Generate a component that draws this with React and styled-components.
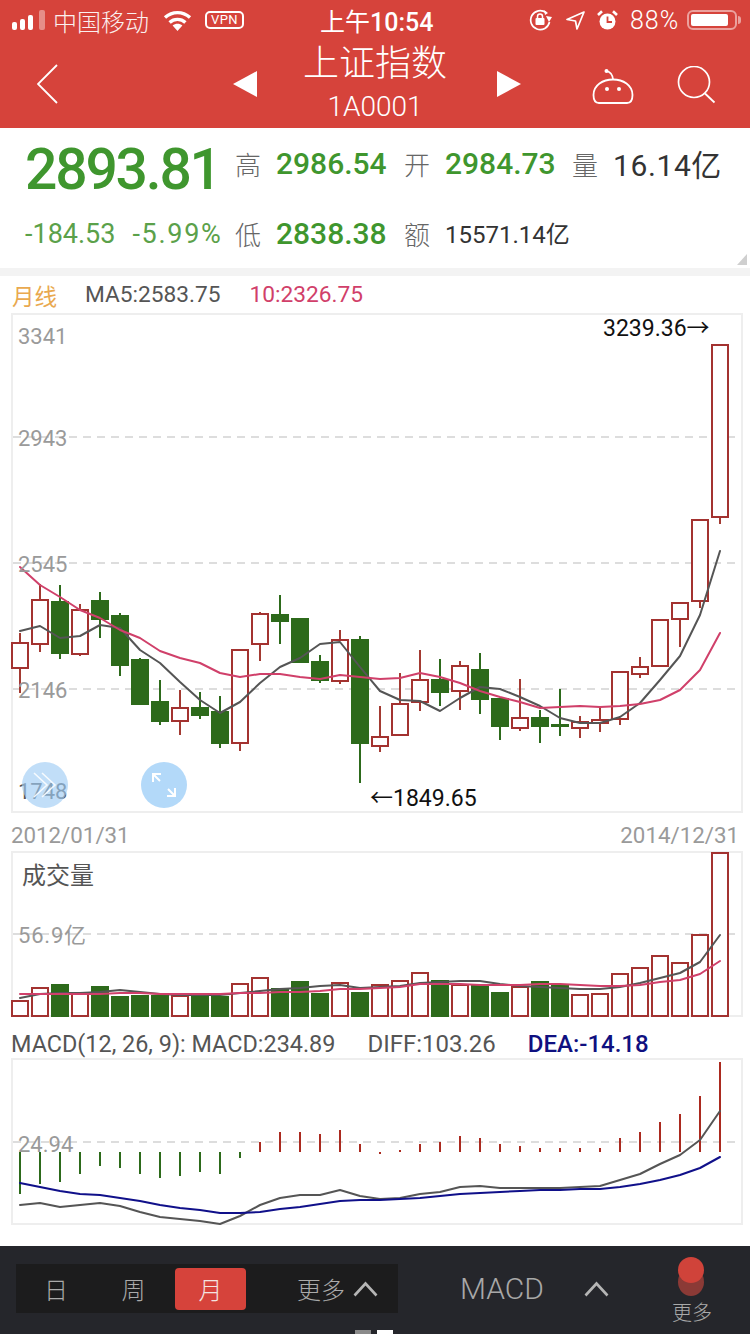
import React from "react";
import styled, { createGlobalStyle } from "styled-components";

const Global = createGlobalStyle`
  html, body { margin: 0; padding: 0; background: #fff; }
  body { font-family: Roboto, "Noto Sans CJK SC", sans-serif; }
`;

const RED = "#d6433b";

const Page = styled.div`
  position: relative;
  width: 750px;
  height: 1334px;
  overflow: hidden;
  display: flex;
  flex-direction: column;
  background: #fff;
`;

/* ---------- header ---------- */
const Header = styled.header`
  height: 128px;
  background: ${RED};
  color: #fff;
  display: flex;
  flex-direction: column;
`;
const StatusBar = styled.div`
  height: 40px;
  display: flex;
  align-items: center;
  font-size: 24px;
  color: #fff;
  padding-left: 12px;
`;
const Carrier = styled.span`
  margin-left: 7px;
  width: 96px;
  opacity: 0.92;
  font-weight: 300;
`;
const Vpn = styled.span`
  margin-left: 13px;
  width: 39px;
  height: 18px;
  box-sizing: border-box;
  border: 2px solid #fff;
  border-radius: 5px;
  font-size: 13px;
  line-height: 14px;
  text-align: center;
  letter-spacing: 0.4px;
`;
const Clock = styled.span`
  margin-left: 76px;
  width: 116px;
  white-space: nowrap;
  font-size: 25px;
  font-weight: 500;
`;
const ClockCjk = styled.span`
  font-weight: 400;
`;
const StatusGap = styled.span`
  width: 76px;
`;
const Percent = styled.span`
  margin-left: 12px;
  width: 52px;
  font-size: 25px;
  font-weight: 300;
  letter-spacing: 1px;
`;
const Battery = styled.span`
  position: relative;
  margin-left: 5px;
  width: 50px;
  height: 20px;
  box-sizing: border-box;
  border: 2px solid rgba(255, 255, 255, 0.5);
  border-radius: 6px;
  padding: 2px;
  display: flex;
  &::before {
    content: "";
    width: 88%;
    background: #fff;
    border-radius: 2px;
  }
  &::after {
    content: "";
    position: absolute;
    right: -6px;
    top: 4px;
    width: 3px;
    height: 8px;
    border-radius: 0 3px 3px 0;
    background: rgba(255, 255, 255, 0.5);
  }
`;
const Nav = styled.nav`
  flex: 1;
  display: flex;
  align-items: center;
  padding-left: 37px;
`;
const TitleBlock = styled.div`
  width: 236px;
  margin-right: 4px;
  display: flex;
  flex-direction: column;
  align-items: center;
  margin-top: -3px;
`;
const Title = styled.div`
  font-size: 36px;
  line-height: 46px;
  font-weight: 300;
  white-space: nowrap;
`;
const Code = styled.div`
  font-size: 28px;
  line-height: 36px;
  font-weight: 300;
  margin-top: 2px;
`;
const Glyph = styled.svg`
  display: block;
  flex: none;
  margin-left: ${(p) => p.$ml || 0}px;
  margin-top: ${(p) => p.$mt || 0}px;
`;

/* ---------- quote ---------- */
const Quote = styled.section`
  position: relative;
  height: 140px;
  box-sizing: border-box;
  padding-left: 25px;
  display: grid;
  grid-template-columns: 210px 41px 128px 41px 127px 41px 1fr;
  grid-template-rows: 70px 70px;
  align-items: center;
  &::after {
    content: "";
    position: absolute;
    right: 3px;
    bottom: 3px;
    width: 10px;
    height: 11px;
    background: #cfcfcf;
    clip-path: polygon(100% 0, 100% 100%, 0 100%);
  }
`;
const Price = styled.div`
  font-size: 57px;
  font-weight: 500;
  line-height: 60px;
  letter-spacing: -2.2px;
  color: #3f962e;
  margin-top: 14px;
  white-space: nowrap;
`;
const Changes = styled.div`
  display: flex;
  gap: 17px;
  font-size: 27px;
  color: #5ba14a;
  white-space: nowrap;
  margin-top: 2px;
`;
const Pct = styled.span`
  letter-spacing: 1.7px;
`;
const QLabel = styled.span`
  font-size: 26px;
  color: #666;
  font-weight: 300;
`;
const QValue = styled.span`
  font-size: ${(p) => p.$size || 30}px;
  font-weight: ${(p) => p.$weight || 500};
  letter-spacing: ${(p) => p.$ls || 0}px;
  color: ${(p) => p.$color || "#3f962e"};
  white-space: nowrap;
  margin-top: ${(p) => p.$mt || 0}px;
  grid-column: ${(p) => (p.$span ? `span ${p.$span}` : "auto")};
`;

const Strip = styled.div`
  height: 8px;
  background: #f3f3f3;
`;

/* ---------- chart legends ---------- */
const Legend = styled.div`
  height: 37px;
  flex: none;
  display: flex;
  align-items: center;
  font-size: 22.7px;
  padding-left: 12px;
  color: #555;
  white-space: nowrap;
`;
const Period = styled.span`
  color: #e9a94f;
  font-size: 22.5px;
  width: 73px;
`;
const Pink = styled.span`
  color: #d13f6a;
  margin-left: 29px;
`;
const MacdRow = styled.div`
  height: 41px;
  box-sizing: border-box;
  padding: 12px 0 0 11px;
  flex: none;
  display: flex;
  align-items: center;
  font-size: 23.4px;
  color: #555;
  white-space: nowrap;
`;
const MacdItem = styled.span`
  margin-left: ${(p) => p.$ml || 0}px;
  font-size: 24px;
  color: ${(p) => p.$color || "#555"};
  font-weight: ${(p) => p.$weight || 400};
`;

/* ---------- chart panels ---------- */
const Panel = styled.div`
  position: relative;
  flex: none;
  width: 732px;
  height: ${(p) => p.$h}px;
  margin-left: 11px;
  box-sizing: border-box;
  border: 2px solid #eee;
  background: #fff;
`;
const Plot = styled.svg`
  display: block;
  overflow: visible;
`;
const Axis = styled.span`
  position: absolute;
  left: 5px;
  top: ${(p) => p.$top}px;
  font-size: 22px;
  line-height: 26px;
  letter-spacing: ${(p) => p.$ls || 0}px;
  color: ${(p) => p.$color || "#9a9a9a"};
  white-space: nowrap;
`;
const VolTitle = styled.span`
  position: absolute;
  left: 9px;
  top: 8px;
  font-size: 24px;
  line-height: 30px;
  color: #555;
`;
const Extreme = styled.span`
  position: absolute;
  left: ${(p) => p.$left}px;
  top: ${(p) => p.$top}px;
  font-size: 23px;
  line-height: 26px;
  color: #111;
  white-space: nowrap;
`;
const Round = styled.span`
  position: absolute;
  left: ${(p) => p.$left}px;
  top: 447px;
  width: 46px;
  height: 46px;
  border-radius: 50%;
  background: ${(p) => (p.$soft ? "rgba(159,205,245,0.65)" : "#b3d9f9")};
  display: flex;
  align-items: center;
  justify-content: center;
`;
const Dates = styled.div`
  height: 38px;
  box-sizing: border-box;
  padding-top: 6px;
  flex: none;
  display: flex;
  align-items: center;
  justify-content: space-between;
  width: 728px;
  margin-left: 11px;
  font-size: 22.3px;
  color: #9a9a9a;
`;

const Grid = styled.line`
  stroke: #d2d2d2;
  stroke-width: 1.5;
  stroke-dasharray: 8 6;
`;
const Wick = styled.line`
  stroke: ${(p) => (p.$up ? "#a33a32" : "#2d6a1b")};
  stroke-width: 2;
`;
const Body = styled.rect`
  fill: ${(p) => (p.$up ? "#fff" : "#2d6a1b")};
  stroke: ${(p) => (p.$up ? "#a33230" : "#2d6a1b")};
  stroke-width: 2;
`;
const Trend = styled.polyline`
  fill: none;
  stroke: ${(p) => p.$color};
  stroke-width: 2;
  stroke-linejoin: round;
  stroke-linecap: round;
`;
const Stem = styled.rect`
  fill: ${(p) => (p.$up ? "#ab2a1f" : "#2d6a1b")};
`;

/* ---------- tool bar ---------- */
const Spacer = styled.div`
  flex: 1;
`;
const Bar = styled.footer`
  height: 88px;
  flex: none;
  background: #25262b;
  display: flex;
  align-items: flex-start;
  padding: 18px 0 0 16px;
  box-sizing: border-box;
  color: #aaa;
`;
const TabGroup = styled.div`
  width: 382px;
  height: 49px;
  background: #1c1c1d;
  display: flex;
  align-items: center;
`;
const Tab = styled.span`
  width: ${(p) => p.$w}px;
  height: 42px;
  margin-left: ${(p) => p.$ml || 0}px;
  display: flex;
  align-items: center;
  justify-content: center;
  font-size: 24px;
  font-weight: 300;
  border-radius: 4px;
  color: ${(p) => (p.$active ? "#f3e3e0" : "#aaa")};
  background: ${(p) => (p.$active ? RED : "transparent")};
`;
const More = styled.span`
  margin-left: 51px;
  font-size: 24px;
  font-weight: 300;
  white-space: nowrap;
`;
const MacdBtn = styled.span`
  margin-left: 62px;
  font-size: 30px;
  line-height: 49px;
  color: #a8a8a8;
  font-weight: 300;
`;
const Menu = styled.div`
  margin-left: 60px;
  width: 44px;
  margin-top: -7px;
  display: flex;
  flex-direction: column;
  align-items: center;
`;
const MenuText = styled.span`
  font-size: 20px;
  line-height: 26px;
  margin-top: 4px;
  margin-left: 2px;
  font-weight: 300;
  white-space: nowrap;
`;
const Dot = styled.span`
  position: absolute;
  bottom: 0;
  left: ${(p) => p.$left}px;
  width: 16px;
  height: 4px;
  background: ${(p) => p.$color};
`;

/* ---------- data ---------- */
// [body-top, body-bottom, wick-top, wick-bottom, up]
const candles = [
  [643,668,633,693,1],[600,644,584,652,1],[602,653,585,659,0],[610,654,604,656,1],
  [601,619,592,638,0],[616,665,613,676,0],[660,704,658,704,0],[702,721,680,725,0],
  [708,721,690,735,1],[708,715,692,719,0],[712,743,696,748,0],[650,743,650,751,1],
  [614,644,612,661,1],[615,621,595,644,0],[619,662,619,663,0],[662,680,655,683,0],
  [640,681,630,684,1],[640,743,636,783,0],[737,746,706,752,1],[704,735,673,735,1],
  [680,702,650,711,1],[680,692,659,706,0],[666,691,661,710,1],[670,699,653,714,0],
  [699,726,699,740,0],[718,728,679,731,1],[718,726,710,743,0],[725,726,689,736,0],
  [722,728,716,738,1],[720,723,707,732,1],[672,719,672,725,1],[667,674,657,678,1],
  [620,666,620,666,1],[603,619,603,647,1],[520,601,520,608,1],[345,517,345,524,1],
];
const ma5 = [631,626,638,636,625,628,650,663,682,700,713,702,683,667,658,644,642,667,691,700,701,711,698,687,689,697,706,718,723,723,717,703,680,656,615,551];
const ma10 = [567,585,597,610,618,630,638,651,658,663,673,677,674,674,677,679,675,677,679,678,673,677,683,691,697,702,708,707,706,707,706,704,700,690,670,633];
const volTops = [1001,988,985,993,987,997,996,996,996,997,997,984,978,989,982,994,983,993,985,981,973,981,985,985,993,987,982,986,995,994,974,968,956,963,935,853];
const volUp = candles.map((c) => c[4]);
const volA = [998,994,993,993,992,990,992,994,995,995,995,993,991,989,988,986,985,988,987,986,983,982,981,981,984,986,987,988,989,989,987,983,978,973,962,935];
const volB = [994,994,994,994,994,993,993,994,994,994,994,993,993,992,992,991,989,989,988,987,984,984,984,985,985,985,984,984,985,986,986,985,982,980,974,961];
const stems = [1194,1184,1182,1174,1166,1168,1174,1178,1176,1172,1174,1158,1142,1132,1132,1134,1130,1144,1154,1150,1144,1142,1136,1138,1144,1146,1148,1148,1148,1148,1138,1132,1122,1114,1096,1062];
const diff = [1205,1203,1207,1205,1203,1206,1212,1217,1219,1221,1224,1216,1205,1198,1195,1195,1190,1196,1199,1198,1194,1192,1187,1186,1188,1188,1188,1188,1187,1186,1180,1174,1164,1155,1140,1111];
const dea = [1183,1187,1191,1194,1195,1198,1201,1205,1208,1210,1213,1213,1212,1209,1207,1204,1201,1200,1200,1199,1198,1196,1194,1193,1192,1191,1190,1190,1189,1189,1187,1184,1180,1175,1168,1157];

const xAt = (i) => 20 + i * 20;
const pts = (a) => a.map((y, i) => `${xAt(i)},${y}`).join(" ");

/* ---------- icons ---------- */
const Signal = () => (
  <Glyph width="34" height="20" viewBox="0 0 34 20">
    <rect x="0" y="12" width="5" height="8" rx="2" fill="#fff" />
    <rect x="8" y="9" width="5" height="11" rx="2" fill="#fff" />
    <rect x="16" y="5" width="5" height="15" rx="2" fill="#fff" />
    <rect x="27" y="0" width="6" height="20" rx="2" fill="#fff" opacity=".4" />
  </Glyph>
);
const Wifi = () => (
  <Glyph $ml={14} width="29" height="21" viewBox="0 0 29 21">
    <path d="M14.5 21 L9.6 15.6 C12.4 13.2 16.6 13.2 19.4 15.6Z" fill="#fff" />
    <path d="M6.6 12.4 C11 8.4 18 8.4 22.4 12.4 M2 7.6 C9.4 1 19.6 1 27 7.6" stroke="#fff" strokeWidth="3.4" fill="none" />
  </Glyph>
);
const RotLock = () => (
  <Glyph $ml={17} width="24" height="22" viewBox="0 0 24 22">
    <path d="M20.5 13 A9.5 9.5 0 1 1 17 3.6" fill="none" stroke="#fff" strokeWidth="1.7" />
    <path d="M17 7 L23 8 L20 13Z M15 1 L19 4 L16 6Z" fill="#fff" />
    <rect x="6.5" y="9" width="9" height="7" rx="1" fill="#fff" />
    <path d="M8.5 9 V7.5 A2.5 2.5 0 0 1 13.5 7.5 V9" fill="none" stroke="#fff" strokeWidth="1.5" />
  </Glyph>
);
const Locate = () => (
  <Glyph $ml={13} width="19" height="19" viewBox="0 0 19 19">
    <path d="M18 1 L1 8.5 L9.5 10 L11 18Z" fill="none" stroke="#fff" strokeWidth="1.7" strokeLinejoin="round" />
  </Glyph>
);
const Alarm = () => (
  <Glyph $ml={12} width="21" height="20" viewBox="0 0 21 20">
    <circle cx="10.5" cy="11.5" r="8" fill="#fff" />
    <path d="M10.5 6.5 V12 H15" fill="none" stroke={RED} strokeWidth="1.8" />
    <path d="M1 5 L5 1.2 M20 5 L16 1.2" stroke="#fff" strokeWidth="2.6" />
  </Glyph>
);
const Back = () => (
  <Glyph width="21" height="40" viewBox="0 0 21 40">
    <path d="M20 1 L1 20 L20 39" fill="none" stroke="#fff" strokeWidth="1.8" />
  </Glyph>
);
const Tri = ({ dir, ml }) => (
  <Glyph $ml={ml} width="24" height="26" viewBox="0 0 24 26">
    <path d={dir === "l" ? "M0 13 L24 0 V26Z" : "M0 0 L24 13 L0 26Z"} fill="#fff" />
  </Glyph>
);
const Robot = () => (
  <Glyph $ml={71} $mt={4} width="42" height="37" viewBox="591 66 42 37">
    <circle cx="605.5" cy="69" r="2" fill="#fff" />
    <path d="M605.5 69 C610 70 611.5 73 612 77" fill="none" stroke="#fff" strokeWidth="1.6" />
    <path d="M592.5 93 C592.5 83 602 77.5 612 77.5 C622 77.5 631.5 83 631.5 93 C631.5 99 629 101 626 101 H598 C595 101 592.5 99 592.5 93Z" fill="none" stroke="#fff" strokeWidth="1.8" />
    <circle cx="606" cy="87" r="2" fill="#fff" />
    <circle cx="618" cy="87" r="2" fill="#fff" />
  </Glyph>
);
const Search = () => (
  <Glyph $ml={43} $mt={2} width="39" height="38" viewBox="676 64 39 38">
    <circle cx="693" cy="80" r="15.5" fill="none" stroke="#fff" strokeWidth="1.7" />
    <path d="M704 91.5 L713.5 100.5" stroke="#fff" strokeWidth="1.8" />
  </Glyph>
);
const Chevron = ({ ml, mt }) => (
  <Glyph $ml={ml} $mt={mt} width="25" height="16" viewBox="0 0 25 16">
    <path d="M1.5 14.5 L12.5 2.5 L23.5 14.5" fill="none" stroke="#b5b5b5" strokeWidth="2.6" />
  </Glyph>
);
const DoubleRight = () => (
  <svg width="30" height="30" viewBox="0 0 30 30">
    <path d="M4 3 L17 15 L4 27 M12 3 L25 15 L12 27" fill="none" stroke="#fff" strokeOpacity=".85" strokeWidth="1.6" />
  </svg>
);
const Expand = () => (
  <svg width="26" height="26" viewBox="0 0 26 26">
    <path d="M2 2 L9 9 M17 17 L24 24" stroke="#fff" strokeWidth="2" />
    <path d="M2 10 V2 H10 M16 24 H24 V16" fill="none" stroke="#fff" strokeWidth="2" />
  </svg>
);
const Dots = () => (
  <Glyph width="28" height="39" viewBox="0 0 28 39">
    <ellipse cx="14" cy="25" rx="13" ry="14" fill="#8b3a36" />
    <ellipse cx="14" cy="13" rx="13" ry="13" fill="#d0433a" />
  </Glyph>
);

const Candles = () =>
  candles.map(([t, b, wt, wb, up], i) => (
    <g key={i}>
      <Wick $up={up} x1={xAt(i)} x2={xAt(i)} y1={wt} y2={wb} />
      <Body $up={up} x={xAt(i) - 8} width={16} y={t} height={Math.max(b - t, 1)} />
    </g>
  ));

export default function App() {
  return (
    <Page>
      <Global />
      <Header>
        <StatusBar>
          <Signal />
          <Carrier>中国移动</Carrier>
          <Wifi />
          <Vpn>VPN</Vpn>
          <Clock><ClockCjk>上午</ClockCjk>10:54</Clock>
          <StatusGap />
          <RotLock />
          <Locate />
          <Alarm />
          <Percent>88%</Percent>
          <Battery />
        </StatusBar>
        <Nav>
          <Back />
          <Tri dir="l" ml={175} />
          <TitleBlock>
            <Title>上证指数</Title>
            <Code>1A0001</Code>
          </TitleBlock>
          <Tri dir="r" />
          <Robot />
          <Search />
        </Nav>
      </Header>

      <Quote>
        <Price>2893.81</Price>
        <QLabel>高</QLabel>
        <QValue>2986.54</QValue>
        <QLabel>开</QLabel>
        <QValue>2984.73</QValue>
        <QLabel>量</QLabel>
        <QValue $color="#333" $weight={400} $ls={0.6}>16.14亿</QValue>
        <Changes>
          <span>-184.53</span>
          <Pct>-5.99%</Pct>
        </Changes>
        <QLabel>低</QLabel>
        <QValue>2838.38</QValue>
        <QLabel>额</QLabel>
        <QValue $size={24} $color="#333" $weight={400} $span={3} $mt={-2}>15571.14亿</QValue>
      </Quote>
      <Strip />

      <Legend>
        <Period>月线</Period>
        <span>MA5:2583.75</span>
        <Pink>10:2326.75</Pink>
      </Legend>

      <Panel $h={500}>
        <Plot width="728" height="496" viewBox="13 315 728 496">
          <Grid x1="13" x2="741" y1="437" y2="437" />
          <Grid x1="13" x2="741" y1="563" y2="563" />
          <Grid x1="13" x2="741" y1="689" y2="689" />
          <Candles />
          <Trend $color="#555" points={pts(ma5)} />
          <Trend $color="#d0406a" points={pts(ma10)} />
        </Plot>
        <Axis $top={9}>3341</Axis>
        <Axis $top={111}>2943</Axis>
        <Axis $top={237}>2545</Axis>
        <Axis $top={363}>2146</Axis>
        <Axis $top={464} $color="#555">1748</Axis>
        <Extreme $left={590} $top={1}>3239.36→</Extreme>
        <Extreme $left={357} $top={471}>←1849.65</Extreme>
        <Round $left={9} $soft><DoubleRight /></Round>
        <Round $left={128}><Expand /></Round>
      </Panel>

      <Dates>
        <span>2012/01/31</span>
        <span>2014/12/31</span>
      </Dates>

      <Panel $h={166}>
        <Plot width="728" height="162" viewBox="13 853 728 162">
          <Grid x1="13" x2="741" y1="934" y2="934" />
          {volTops.map((t, i) => (
            <Body key={i} $up={volUp[i]} x={xAt(i) - 8} width={16} y={t} height={1016 - t} />
          ))}
          <Trend $color="#555" points={pts(volA)} />
          <Trend $color="#d0406a" points={pts(volB)} />
        </Plot>
        <VolTitle>成交量</VolTitle>
        <Axis $top={70} $ls={0.8}>56.9亿</Axis>
      </Panel>

      <MacdRow>
        <span>MACD(12, 26, 9): MACD:234.89</span>
        <MacdItem $ml={32}>DIFF:103.26</MacdItem>
        <MacdItem $ml={32} $color="#0f1080" $weight={500}>DEA:-14.18</MacdItem>
      </MacdRow>

      <Panel $h={167}>
        <Plot width="728" height="163" viewBox="13 1060 728 163">
          <Grid x1="13" x2="741" y1="1142" y2="1142" />
          {stems.map((y, i) => {
            const up = i > 11;
            const top = up ? y : 1152;
            const h = up ? Math.abs(1152 - y) : y - 1152;
            return <Stem key={i} $up={up} x={xAt(i) - 1} y={i === 18 ? 1152 : top} width={2} height={Math.max(h, 2)} />;
          })}
          <Trend $color="#555" points={pts(diff)} />
          <Trend $color="#10108a" points={pts(dea)} />
        </Plot>
        <Axis $top={72}>24.94</Axis>
      </Panel>

      <Spacer />

      <Bar>
        <TabGroup>
          <Tab $w={80}>日</Tab>
          <Tab $w={75}>周</Tab>
          <Tab $w={71} $ml={4} $active>月</Tab>
          <More>更多</More>
          <Chevron ml={8} />
        </TabGroup>
        <MacdBtn>MACD</MacdBtn>
        <Chevron ml={40} mt={17} />
        <Menu>
          <Dots />
          <MenuText>更多</MenuText>
        </Menu>
      </Bar>
      <Dot $left={355} $color="#8a8a8a" />
      <Dot $left={377} $color="#fff" />
    </Page>
  );
}
